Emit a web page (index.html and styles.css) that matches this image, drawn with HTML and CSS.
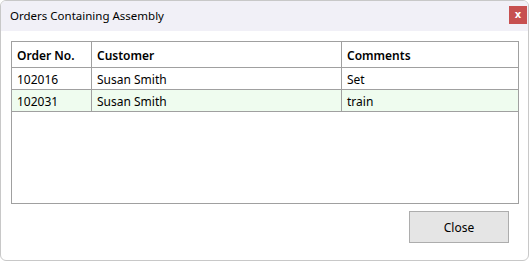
FILE: index.html
```html
<!DOCTYPE html>
<html>
<head>
    <meta name="viewport" content="width=device-width, initial-scale=1.0">
    <link rel="stylesheet" href="styles.css">
</head>
<body>
    <div class="window">
        <div class="titlebar">
            <span class="title">Orders Containing Assembly</span>
            <button class="close-x">x</button>
        </div>

        <div class="content">
            <div class="grid-box">
                <table class="grid">
                    <thead>
                        <tr>
                            <th class="col-order">Order No.</th>
                            <th class="col-customer">Customer</th>
                            <th class="col-comments">Comments</th>
                        </tr>
                    </thead>
                    <tbody>
                        <tr>
                            <td>102016</td>
                            <td>Susan Smith</td>
                            <td>Set</td>
                        </tr>
                        <tr class="alt">
                            <td>102031</td>
                            <td>Susan Smith</td>
                            <td>train</td>
                        </tr>
                    </tbody>
                </table>
            </div>

            <div class="actions">
                <button class="close-btn">Close</button>
            </div>
        </div>
    </div>
</body>
</html>
```

FILE: styles.css
```css
/* Basic page setup */
body {
    margin: 0;
    background: #ffffff;
    font-family: "Noto Sans", "Open Sans", sans-serif;
    font-size: 12px;
    color: #000;
}

/* Dialog window */
.window {
    width: 527px;
    height: 259px;
    border: 1px solid #c8c8c8;
    border-radius: 6px;
    background: #fff;
    overflow: hidden;
}

/* Title bar */
.titlebar {
    height: 30px;
    background: #f1f0f7;
    display: flex;
    align-items: center;
    justify-content: space-between;
    padding: 0 0 0 9px;
}

.title {
    font-size: 11.5px;
    margin-top: -1px;
}

.close-x {
    width: 18px;
    height: 18px;
    margin: -3px 1px 0 0;
    padding: 0;
    border: none;
    background: #c75050;
    color: #fff;
    font-family: "DejaVu Sans", sans-serif;
    font-weight: bold;
    font-size: 10px;
    line-height: 16px;
}

/* Body of the dialog */
.content {
    padding: 10px 9px 0 10px;
}

.grid-box {
    height: 161px;
    border: 1px solid #a0a0a0;
}

.grid {
    width: 100%;
    border-collapse: collapse;
    font-size: 12px;
}

.grid th,
.grid td {
    text-align: left;
    padding: 2px 5px 0;
    border-left: 1px solid #a0a0a0;
    border-bottom: 1px solid #a0a0a0;
    white-space: nowrap;
}

.grid th:first-child,
.grid td:first-child {
    border-left: none;
}

.grid th {
    height: 23px;
    font-weight: 600;
}

.grid td {
    height: 19px;
}

.col-order {
    width: 69px;
}

.col-customer {
    width: 239px;
}

.grid tr.alt td {
    background: #effcef;
}

/* Bottom button */
.actions {
    display: flex;
    justify-content: flex-end;
    padding: 7px 10px 0 0;
}

.close-btn {
    width: 100px;
    height: 32px;
    border: 1px solid #adadad;
    background: #e5e5e5;
    font-family: "Noto Sans", "Open Sans", sans-serif;
    font-size: 12px;
    color: #000;
    padding: 0;
}
```
